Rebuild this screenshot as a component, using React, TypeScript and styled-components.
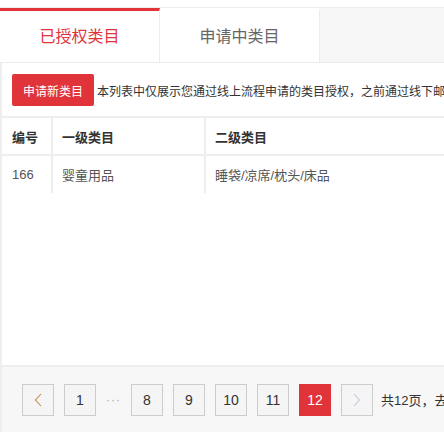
import React, { useState } from 'react';
import styled, { createGlobalStyle } from 'styled-components';

const GlobalStyle = createGlobalStyle`
  html, body {
    margin: 0;
    padding: 0;
    background: #fff;
    overflow: hidden;
  }
  body {
    font-family: "Liberation Sans", "Noto Sans CJK SC", sans-serif;
    color: #333;
  }
  * { box-sizing: border-box; }
`;

const Page = styled.div`
  width: 444px;
  height: 432px;
  padding-top: 7px;
  display: flex;
  flex-direction: column;
  overflow: hidden;
`;

const TabBar = styled.div`
  display: flex;
  height: 56px;
  background: #f7f7f7;
  border-top: 1px solid #ececec;
  border-bottom: 1px solid #ececec;
  flex-shrink: 0;
`;

const Tab = styled.div<{ $active?: boolean }>`
  width: 160px;
  display: flex;
  align-items: center;
  justify-content: center;
  background: #fff;
  font-size: 16px;
  color: ${p => (p.$active ? '#e0343a' : '#666')};
  border-top: 3px solid ${p => (p.$active ? '#e0343a' : '#fff')};
  border-right: 1px solid #ececec;
  padding-bottom: 3px;
  cursor: pointer;
`;

const Body = styled.div`
  flex: 1;
  display: flex;
  flex-direction: column;
  border-left: 2px solid #eeeeee;
  min-height: 0;
`;

const Toolbar = styled.div`
  display: flex;
  align-items: center;
  gap: 3px;
  padding: 11px 0 10px 10px;
  white-space: nowrap;
`;

const ApplyButton = styled.button`
  width: 82px;
  height: 32px;
  border: none;
  border-radius: 2px;
  background: #e0343a;
  color: #fff;
  font-family: inherit;
  font-size: 12px;
  flex-shrink: 0;
  cursor: pointer;
`;

const Notice = styled.span`
  font-size: 12px;
  color: #333;
`;

const Table = styled.table`
  border-collapse: collapse;
  width: 442px;
  table-layout: fixed;
  border-top: 2px solid #eeeeee;
`;

const Th = styled.th<{ $w?: number }>`
  width: ${p => (p.$w ? `${p.$w}px` : 'auto')};
  height: 38px;
  text-align: left;
  font-size: 13px;
  font-weight: bold;
  color: #333;
  padding: 0 9px 0 9px;
  border-right: 2px solid #eeeeee;
  border-bottom: 2px solid #eeeeee;
  &:first-child { padding-left: 10px; }
  &:last-child { border-right: none; }
`;

const Td = styled.td`
  height: 38px;
  font-size: 13px;
  color: #555;
  padding: 0 9px 0 9px;
  border-right: 2px solid #eeeeee;
  white-space: nowrap;
  &:first-child { padding-left: 10px; }
  &:last-child { border-right: none; }
`;

const Spacer = styled.div`
  flex: 1;
`;

const Pager = styled.div`
  height: 67px;
  flex-shrink: 0;
  background: #f7f7f7;
  border-top: 2px solid #eeeeee;
  display: flex;
  align-items: center;
  gap: 10px;
  padding: 0 0 0 20px;
  white-space: nowrap;
`;

const PageBtn = styled.button<{ $current?: boolean }>`
  width: 32px;
  height: 32px;
  flex-shrink: 0;
  display: flex;
  align-items: center;
  justify-content: center;
  padding: 0;
  font-family: inherit;
  font-size: 14px;
  color: ${p => (p.$current ? '#fff' : '#333')};
  background: ${p => (p.$current ? '#e0343a' : '#f5f5f5')};
  border: 1px solid ${p => (p.$current ? '#e0343a' : '#cccccc')};
  cursor: pointer;
`;

const Dots = styled.span`
  width: 16px;
  text-align: center;
  color: #aaa;
  font-size: 12px;
  letter-spacing: 1px;
`;

const Total = styled.span`
  font-size: 13px;
  color: #333;
  margin-left: -2px;
`;

const Chevron: React.FC<{ dir: 'left' | 'right'; color: string }> = ({ dir, color }) => (
  <svg width="8" height="14" viewBox="0 0 8 14">
    <path
      d={dir === 'left' ? 'M7 1 L1.5 7 L7 13' : 'M1 1 L6.5 7 L1 13'}
      fill="none"
      stroke={color}
      strokeWidth="1.1"
    />
  </svg>
);

const rows = [{ id: 166, first: '婴童用品', second: '睡袋/凉席/枕头/床品' }];

const App: React.FC = () => {
  const [tab, setTab] = useState(0);
  const pages = [8, 9, 10, 11, 12];

  return (
    <Page>
      <GlobalStyle />
      <TabBar>
        <Tab $active={tab === 0} onClick={() => setTab(0)}>已授权类目</Tab>
        <Tab $active={tab === 1} onClick={() => setTab(1)}>申请中类目</Tab>
      </TabBar>
      <Body>
        <Toolbar>
          <ApplyButton>申请新类目</ApplyButton>
          <Notice>本列表中仅展示您通过线上流程申请的类目授权，之前通过线下邮件申请的类目授权请联系小二查询</Notice>
        </Toolbar>
        <Table>
          <thead>
            <tr>
              <Th $w={50}>编号</Th>
              <Th $w={153}>一级类目</Th>
              <Th>二级类目</Th>
            </tr>
          </thead>
          <tbody>
            {rows.map(r => (
              <tr key={r.id}>
                <Td>{r.id}</Td>
                <Td>{r.first}</Td>
                <Td>{r.second}</Td>
              </tr>
            ))}
          </tbody>
        </Table>
        <Spacer />
        <Pager>
          <PageBtn><Chevron dir="left" color="#c8884a" /></PageBtn>
          <PageBtn>1</PageBtn>
          <Dots>···</Dots>
          {pages.map(p => (
            <PageBtn key={p} $current={p === 12}>{p}</PageBtn>
          ))}
          <PageBtn><Chevron dir="right" color="#c0c8d8" /></PageBtn>
          <Total>共12页，去第</Total>
        </Pager>
      </Body>
    </Page>
  );
};

export default App;
